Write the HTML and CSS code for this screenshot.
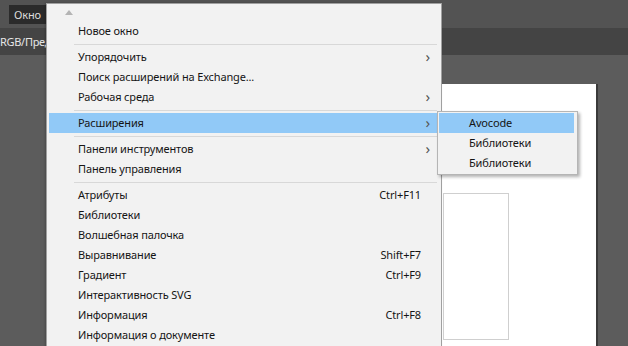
FILE: index.html
```html
<!DOCTYPE html>
<html lang="ru">
<head>
<meta charset="utf-8">
<link rel="stylesheet" href="styles.css">
</head>
<body>
<div class="app">
  <div class="menubar">
    <span class="menubtn">Окно</span>
  </div>
  <div class="tabbar">
    <span class="tab">RGB/Пред</span>
  </div>
  <div class="workspace">
    <div class="doc">
      <div class="artboard"></div>
    </div>
  </div>

  <div class="menu">
    <div class="scroll-up"><svg width="8" height="5" viewBox="0 0 8 5"><path d="M0 5 L4 0 L8 5 Z" fill="#b4b4b4"/></svg></div>
    <div class="item"><span class="label">Новое окно</span></div>
    <div class="sep"></div>
    <div class="item"><span class="label">Упорядочить</span><span class="arrow">›</span></div>
    <div class="item"><span class="label">Поиск расширений на Exchange...</span></div>
    <div class="item"><span class="label">Рабочая среда</span><span class="arrow">›</span></div>
    <div class="sep"></div>
    <div class="item active"><span class="label">Расширения</span><span class="arrow">›</span></div>
    <div class="sep"></div>
    <div class="item"><span class="label">Панели инструментов</span><span class="arrow">›</span></div>
    <div class="item"><span class="label">Панель управления</span></div>
    <div class="sep"></div>
    <div class="item"><span class="label">Атрибуты</span><span class="key">Ctrl+F11</span></div>
    <div class="item"><span class="label">Библиотеки</span></div>
    <div class="item"><span class="label">Волшебная палочка</span></div>
    <div class="item"><span class="label">Выравнивание</span><span class="key">Shift+F7</span></div>
    <div class="item"><span class="label">Градиент</span><span class="key">Ctrl+F9</span></div>
    <div class="item"><span class="label">Интерактивность SVG</span></div>
    <div class="item"><span class="label">Информация</span><span class="key">Ctrl+F8</span></div>
    <div class="item"><span class="label">Информация о документе</span></div>
  </div>

  <div class="submenu">
    <div class="subitem active">Avocode</div>
    <div class="subitem">Библиотеки</div>
    <div class="subitem">Библиотеки</div>
  </div>
</div>
</body>
</html>
```
FILE: styles.css
```css
* { box-sizing: border-box; }
html, body { margin: 0; padding: 0; }
body {
  width: 628px;
  height: 346px;
  overflow: hidden;
  font-family: "Noto Sans", "Open Sans", sans-serif;
  font-size: 11px;
  letter-spacing: -0.15px;
  background: #5c5c5c;
}
.app {
  position: relative;
  width: 628px;
  height: 346px;
  display: flex;
  flex-direction: column;
}
.menubar {
  height: 28px;
  background: #535353;
  display: flex;
  align-items: center;
  padding-left: 9px;
}
.menubtn {
  background: #2b2b2b;
  color: #dcdcdc;
  padding: 2px 5px;
  line-height: 15px;
}
.tabbar {
  height: 27px;
  background: #444444;
  display: flex;
  align-items: center;
}
.tab {
  color: #e6e6e6;
  padding-left: 0;
  letter-spacing: -0.3px;
}
.workspace {
  flex: 1;
  background: #5c5c5c;
  padding: 29px 0 0 441px;
  display: flex;
}
.doc {
  width: 157px;
  background: #ffffff;
  border-right: 2px solid #3a3a3a;
  padding: 109px 0 0 2px;
}
.artboard {
  width: 66px;
  height: 147px;
  border: 1px solid #cfcfcf;
}

.menu {
  position: absolute;
  left: 46px;
  top: 3px;
  width: 396px;
  height: 360px;
  background: #f2f2f2;
  border: 1px solid #a0a0a0;
  padding: 0 4px 0 2px;
  color: #151515;
  box-shadow: -1px 0 2px rgba(0,0,0,0.2);
}
.scroll-up {
  height: 17px;
  padding: 6px 0 0 16px;
  display: flex;
}
.item {
  height: 20px;
  display: flex;
  align-items: center;
  padding-left: 29px;
  padding-bottom: 1px;
  position: relative;
}
.item.active { background: #91c9f7; }
.label { flex: 1; white-space: nowrap; }
.key {
  width: 60px;
  text-align: right;
  margin-right: 16px;
  white-space: nowrap;
}
.arrow {
  position: absolute;
  right: 7px;
  top: 0;
  line-height: 18px;
  font-size: 15px;
  color: #555;
}
.sep {
  height: 6px;
  margin-left: 25px;
  display: flex;
  align-items: center;
}
.sep::after {
  content: "";
  flex: 1;
  height: 1px;
  background: #d8d8d8;
}

.submenu {
  position: absolute;
  left: 437px;
  top: 111px;
  width: 141px;
  height: 64px;
  background: #f2f2f2;
  border: 1px solid #b5b5b5;
  padding: 1px 3px 0 1px;
  box-shadow: 2px 2px 3px rgba(0,0,0,0.3);
  color: #151515;
}
.subitem {
  height: 20px;
  line-height: 19px;
  padding-left: 30px;
}
.subitem.active { background: #91c9f7; }
```
